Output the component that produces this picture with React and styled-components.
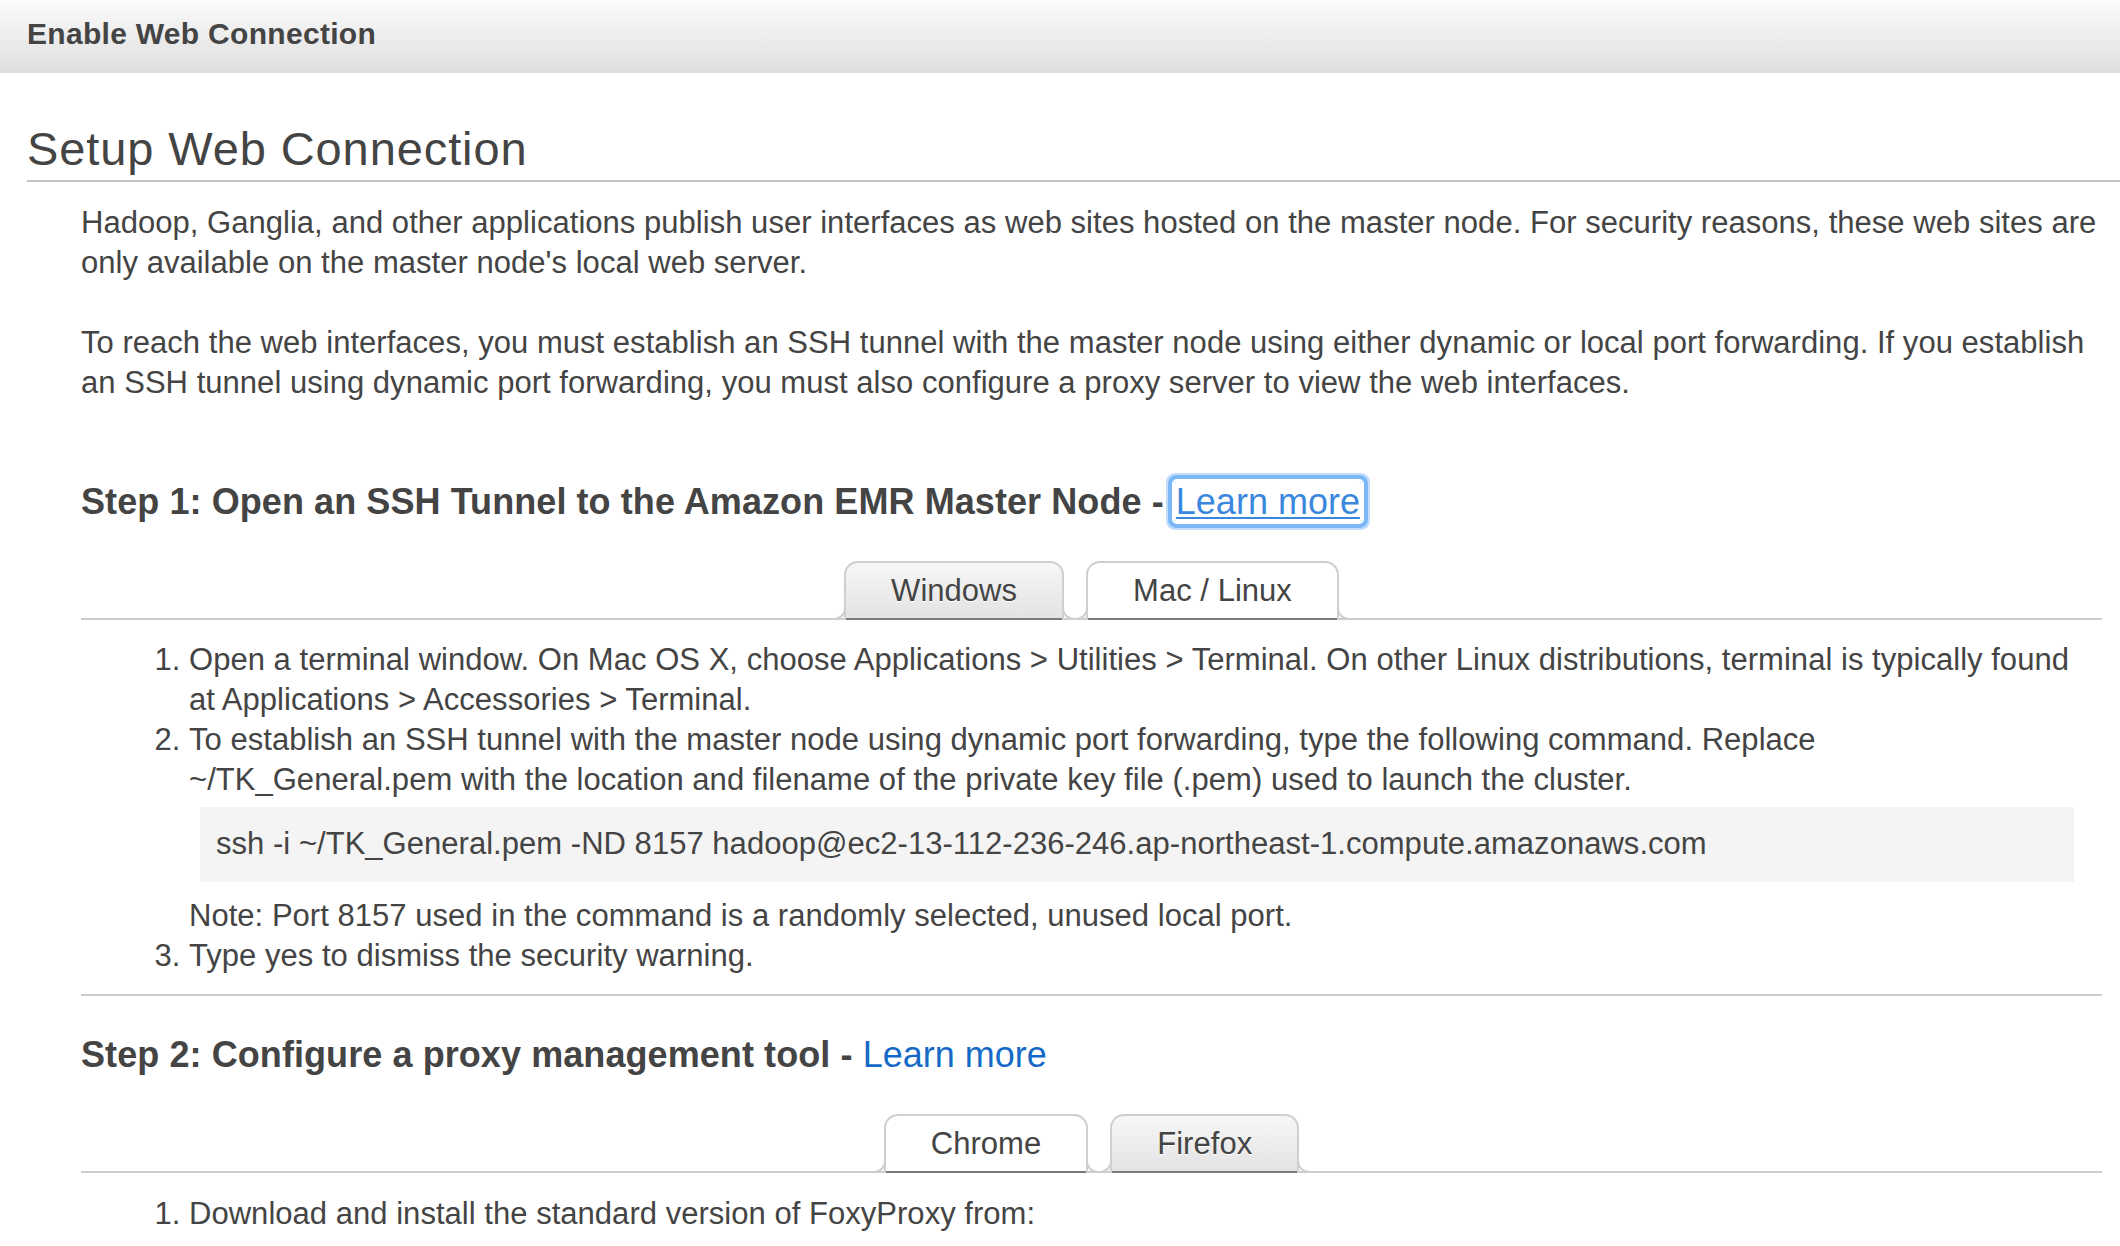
import React from "react";
import styled, { createGlobalStyle } from "styled-components";

const GlobalStyle = createGlobalStyle`
  body {
    margin: 0;
    background: #fff;
    color: #444;
    font-family: "Liberation Sans", Arial, Helvetica, sans-serif;
  }
`;

const TitleBar = styled.header`
  height: 73px;
  box-sizing: border-box;
  padding: 0 0 6px 27px;
  display: flex;
  align-items: center;
  background: linear-gradient(#fbfbfb, #dfdfdf);
  font-size: 30px;
  font-weight: bold;
  letter-spacing: 0.3px;
  color: #444;
`;

const Page = styled.main`
  padding-left: 27px;
`;

const PageHeading = styled.h1`
  margin: 50px 0 0;
  padding-bottom: 5px;
  font-size: 47px;
  line-height: 52px;
  font-weight: normal;
  letter-spacing: 0.9px;
  color: #444;
  border-bottom: 2px solid #c4c4c4;
`;

const Content = styled.div`
  margin-left: 54px;
  padding-right: 14px;
  font-size: 31px;
  letter-spacing: 0.03px;
  line-height: 40px;
`;

const Para = styled.p`
  margin: ${(p) => p.$top || 40}px 0 0;
`;

const StepHeading = styled.h3`
  margin: ${(p) => p.$top}px 0 0;
  font-size: 36px;
  line-height: 40px;
  font-weight: bold;
  letter-spacing: 0.08px;
  color: #444;
`;

const Link = styled.a`
  font-weight: normal;
  letter-spacing: 0;
  color: #1569c7;
  text-decoration: none;
  cursor: pointer;
`;

const FocusedLink = styled(Link)`
  color: #3a88de;
  text-decoration: underline;
  text-decoration-thickness: 2px;
  text-underline-offset: 3px;
  padding: 0 2px;
  box-shadow: 0 0 0 2px #fff, 0 0 0 6px #7db8f6, 0 0 0 8px #c2ddfb;
  border-radius: 3px;
`;

const TabStrip = styled.div`
  margin: 39px 4px 0 0;
  display: flex;
  justify-content: center;
  align-items: flex-end;
  gap: 22px;
  height: 57px;
  border-bottom: 2px solid #cdcdcd;
`;

const Tab = styled.div`
  position: relative;
  box-sizing: border-box;
  height: 59px;
  margin-bottom: -2px;
  padding: 0 45px 2px;
  display: flex;
  align-items: center;
  border: 2px solid #cfcfcf;
  border-bottom: none;
  border-radius: 14px 14px 0 0;
  background: ${(p) => (p.$active ? "#fff" : "linear-gradient(#f7f7f7, #e2e2e2)")};
  box-shadow: inset 0 -2px 0 #7b7b7b;
  text-shadow: ${(p) => (p.$active ? "none" : "0 1px 0 #fff")};
  color: #444;
  cursor: pointer;

  &::before,
  &::after {
    content: "";
    position: absolute;
    bottom: 0;
    width: 10px;
    height: 12px;
    border-bottom: 2px solid #cfcfcf;
  }
  &::before {
    left: -12px;
    border-right: 2px solid #cfcfcf;
    border-bottom-right-radius: 12px;
  }
  &::after {
    right: -12px;
    border-left: 2px solid #cfcfcf;
    border-bottom-left-radius: 12px;
  }
`;

const Steps = styled.ol`
  margin: ${(p) => p.$top}px 0 0;
  padding: 0 26px 0 108px;
`;

const Item = styled.li`
  line-height: 40px;
`;

const CodeBlock = styled.div`
  margin: 7px 6px 14px 11px;
  padding: 17px 16px 18px;
  background: #f4f4f4;
  line-height: 40px;
`;

const Divider = styled.hr`
  margin: 18px 4px 0 0;
  border: none;
  border-top: 2px solid #cdcdcd;
`;

function Tabs({ items, active }) {
  return (
    <TabStrip>
      {items.map((label) => (
        <Tab key={label} $active={label === active}>
          {label}
        </Tab>
      ))}
    </TabStrip>
  );
}

export default function App() {
  return (
    <>
      <GlobalStyle />
      <TitleBar>Enable Web Connection</TitleBar>
      <Page>
        <PageHeading>Setup Web Connection</PageHeading>
        <Content>
          <Para $top={21}>
            Hadoop, Ganglia, and other applications publish user interfaces as web sites hosted on the
            master node. For security reasons, these web sites are only available on the master node's
            local web server.
          </Para>
          <Para>
            To reach the web interfaces, you must establish an SSH tunnel with the master node using
            either dynamic or local port forwarding. If you establish an SSH tunnel using dynamic port
            forwarding, you must also configure a proxy server to view the web interfaces.
          </Para>

          <StepHeading $top={79}>
            Step 1: Open an SSH Tunnel to the Amazon EMR Master Node -{" "}
            <FocusedLink>Learn more</FocusedLink>
          </StepHeading>
          <Tabs items={["Windows", "Mac / Linux"]} active="Mac / Linux" />
          <Steps $top={20}>
            <Item>
              Open a terminal window. On Mac OS X, choose Applications &gt; Utilities &gt; Terminal. On
              other Linux distributions, terminal is typically found at Applications &gt; Accessories
              &gt; Terminal.
            </Item>
            <Item>
              To establish an SSH tunnel with the master node using dynamic port forwarding, type the
              following command. Replace ~/TK_General.pem with the location and filename of the private
              key file (.pem) used to launch the cluster.
              <CodeBlock>
                ssh -i ~/TK_General.pem -ND 8157
                hadoop@ec2-13-112-236-246.ap-northeast-1.compute.amazonaws.com
              </CodeBlock>
              Note: Port 8157 used in the command is a randomly selected, unused local port.
            </Item>
            <Item>Type yes to dismiss the security warning.</Item>
          </Steps>
          <Divider />

          <StepHeading $top={39}>
            Step 2: Configure a proxy management tool - <Link>Learn more</Link>
          </StepHeading>
          <Tabs items={["Chrome", "Firefox"]} active="Chrome" />
          <Steps $top={21}>
            <Item>Download and install the standard version of FoxyProxy from:</Item>
          </Steps>
        </Content>
      </Page>
    </>
  );
}
